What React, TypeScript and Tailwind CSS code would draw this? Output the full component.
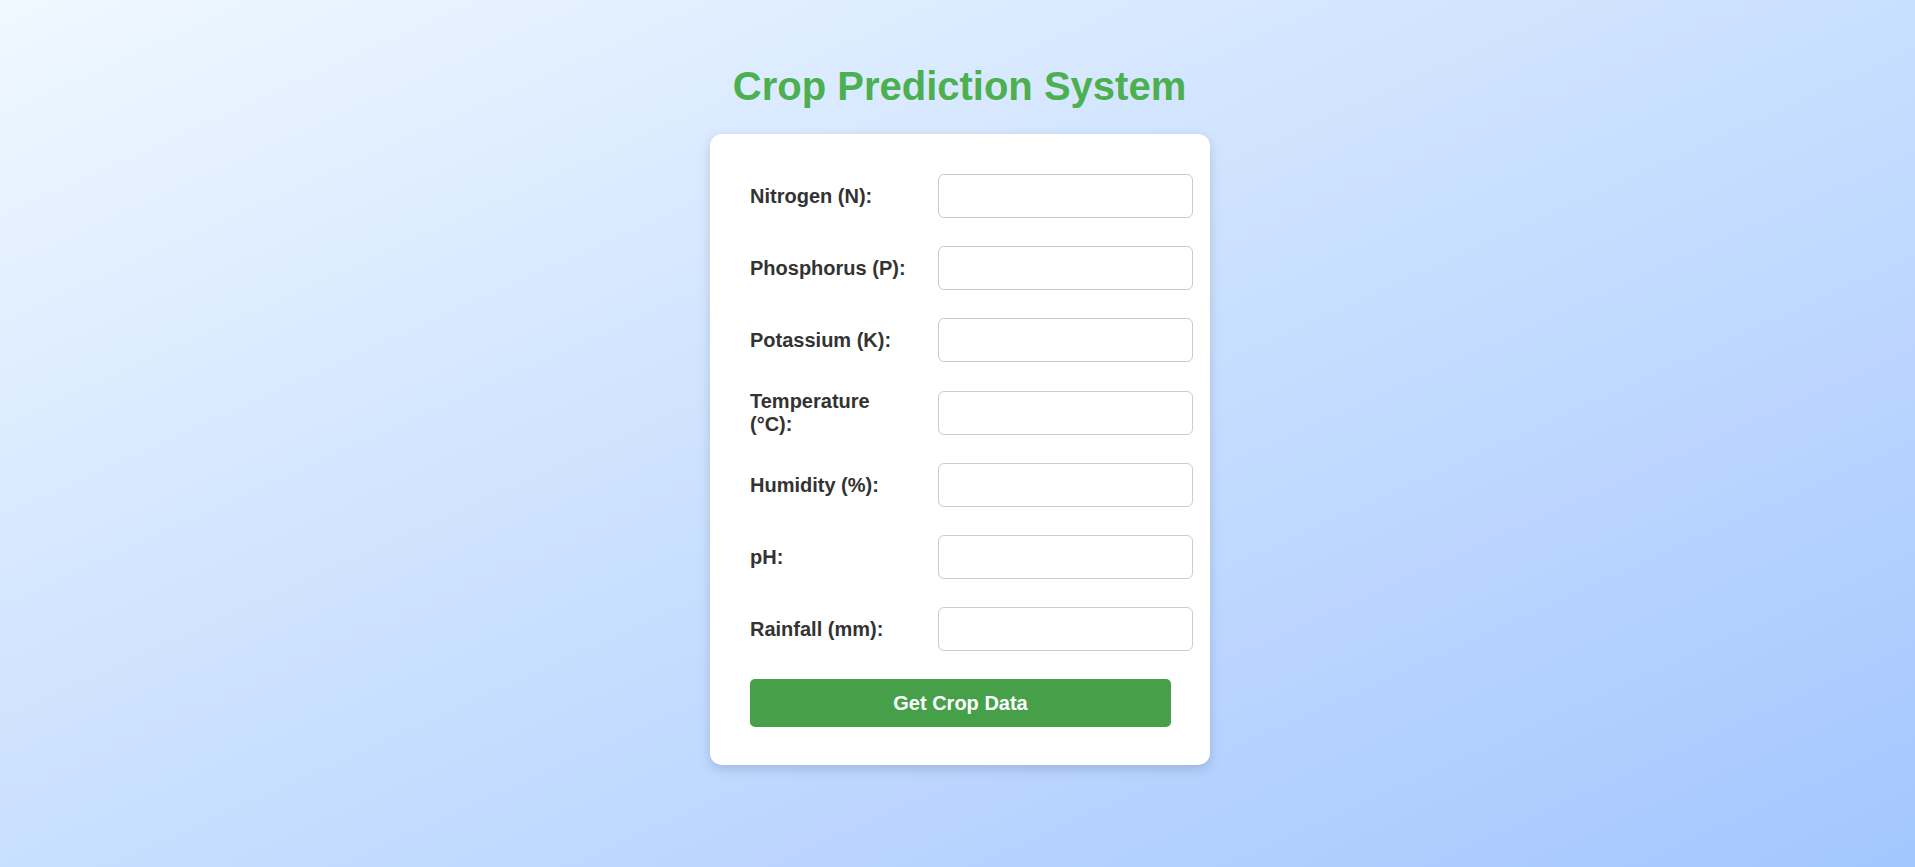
import React from "react";

const fields = [
  "Nitrogen (N):",
  "Phosphorus (P):",
  "Potassium (K):",
  "Temperature (°C):",
  "Humidity (%):",
  "pH:",
  "Rainfall (mm):",
];

export default function App() {
  return (
    <div
      className="min-h-[867px] w-full bg-gradient-to-br from-[#f0f8ff] to-[#a3c6ff] flex flex-col items-center pt-[63px]"
      style={{ fontFamily: '"Liberation Sans", Arial, sans-serif' }}
    >
      <h1 className="text-[40px] leading-[46px] font-bold text-[#4caf50] mb-[25px] ml-[4px]">
        Crop Prediction System
      </h1>
      <div className="w-[500px] ml-[5px] bg-white rounded-[12px] shadow-[0_4px_12px_rgba(0,0,0,0.15)] pt-[40px] pb-[38px] px-[40px] flex flex-col gap-[28px]">
        {fields.map((f) => (
          <div key={f} className="flex items-center">
            <label className="w-[160px] shrink-0 text-[20px] font-bold text-[#333] leading-[22.5px]">
              {f}
            </label>
            <input
              type="text"
              className="ml-[28px] w-[255px] h-[44px] shrink-0 border border-[#ccc] rounded-[6px] bg-white outline-none px-[10px]"
            />
          </div>
        ))}
        <button className="w-[421px] h-[48px] bg-[#45a049] text-white text-[20px] font-bold rounded-[5px]">
          Get Crop Data
        </button>
      </div>
    </div>
  );
}
